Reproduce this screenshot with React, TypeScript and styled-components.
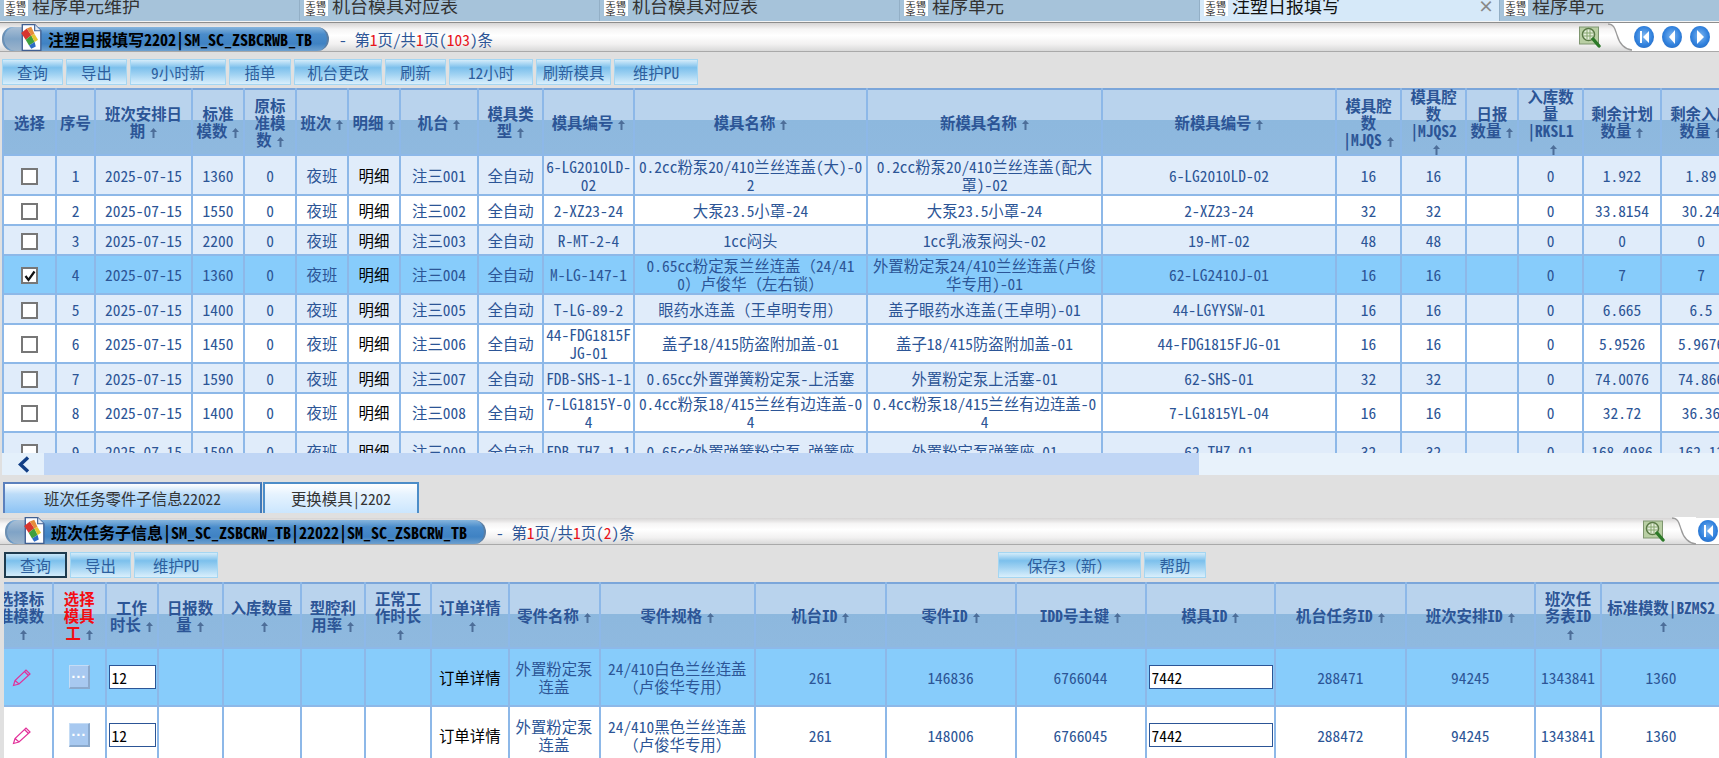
import React from 'react';
import styled, { createGlobalStyle } from 'styled-components';

const Global = createGlobalStyle`
  html, body { margin: 0; padding: 0; height: 100%; overflow: hidden; }
  body {
    font-family: "Noto Sans CJK SC", "Liberation Sans", sans-serif;
    font-size: 15.4px;
    font-feature-settings: "hwid";
    color: #2c5596;
  }
`;

const Page = styled.div`
  width: 1719px; height: 758px; overflow: hidden;
  background: #e0e0e0;
  display: flex; flex-direction: column;
`;

const FullWidth = styled.span` font-feature-settings: normal; `;

/* ---------- top tab strip ---------- */
const TabStrip = styled.div`
  height: 21px; flex: none; display: flex; overflow: hidden;
  background: #a6c3da;
`;
const TabItem = styled.div<{ $active?: boolean }>`
  width: 300px; flex: none; height: 21px; display: flex; gap: 4px;
  padding-left: 4px; box-sizing: border-box; position: relative;
  background: ${p => (p.$active ? '#d6e9f9' : '#a6c3da')};
  border-right: 1px solid #93afc6;
  color: ${p => (p.$active ? '#111' : '#333')};
  font-size: 18px; line-height: 10px;
`;
const TabLogo = styled.div`
  width: 24px; height: 16px; flex: none; background: #fff; overflow: hidden;
  color: #222; font-size: 10px; line-height: 8px; text-align: center; letter-spacing: 0.5px;
  display: flex; flex-direction: column; justify-content: flex-end;
`;
const TabLogoLine = styled.span`
  display: block; flex: none; height: 8px; transform: scaleY(0.72);
`;
const TabClose = styled.span`
  position: absolute; right: 5px; top: -1px; color: #888; font-size: 16px; font-weight: bold; line-height: 12px;
`;
const TabRule = styled.div`
  height: 2px; flex: none; background: #f4f4f4; border-bottom: 1px solid #8d8d8d; box-sizing: border-box;
`;

/* ---------- title bar ---------- */
const TitleBar = styled.div<{ $h: number }>`
  height: ${p => p.$h}px; flex: none; display: flex; align-items: flex-end; position: relative;
  padding-left: ${p => (p.$h > 27 ? 2 : 5)}px; box-sizing: border-box;
  background: linear-gradient(#d6d4d4 0%, #f6f5f5 22%, #ffffff 45%, #f2f1f1 75%, #d9d9d9 100%);
  border-bottom: 1px solid #a9a9a9;
`;
const Capsule = styled.div<{ $w: number }>`
  width: ${p => p.$w}px; height: 24px; box-sizing: border-box; flex: none; position: relative;
  border-radius: 13px 14px 14px 13px;
  background: linear-gradient(#86b5dd 0%, #4a8ccb 30%, #3f82c3 70%, #6da0cf 100%);
  border-right: 2px solid #5b7ea3; border-left: 2px solid #6e90b2;
  display: flex; align-items: center; padding-left: 44px;
  color: #000; font-weight: bold; font-size: 16px; white-space: nowrap;
  &::before {
    content: ''; position: absolute; left: 0; top: 0; bottom: 0; width: 20px;
    border-radius: 12px 0 0 12px;
    background: linear-gradient(#a9bfd5, #7fa3c6 50%, #9cb4cb);
  }
`;
const CapsuleIcon = styled.svg`
  position: absolute; left: 16px; top: -3px;
`;
const Pager = styled.div`
  margin-left: 10px; height: 24px; line-height: 24px; white-space: nowrap; color: #2c5596;
`;
const Red = styled.span` color: #e8121a; `;
const TitleTools = styled.div`
  margin-left: auto; height: 100%; display: flex; align-items: center; flex: none; gap: 5px;
`;
const SwooshTail = styled.div` display: flex; align-items: center; height: 100%; `;
const Tail = styled.div<{ $w: number }>`
  width: ${p => p.$w}px; flex: none; height: 100%; display: flex; align-items: center; gap: 8px; overflow: hidden;
  background: #fff; padding-left: 2px; box-sizing: border-box;
`;

/* ---------- toolbars ---------- */
const Toolbar = styled.div<{ $h: number; $left: number }>`
  height: ${p => p.$h}px; flex: none; box-sizing: border-box;
  padding: 7px 0 0 ${p => p.$left}px;
  display: flex; gap: 3px; align-items: flex-start;
`;
const ToolButton = styled.button<{ $w: number; $focus?: boolean }>`
  width: ${p => p.$w}px; height: 26px; flex: none; padding: 0; box-sizing: border-box;
  font: inherit; font-size: 15.4px; font-feature-settings: "hwid"; line-height: 22px; color: #2c5f9e;
  border: 1px solid #fff;
  outline: 1px solid ${p => (p.$focus ? '#1d3a4e' : '#a4d6f2')}; outline-offset: -1px;
  box-shadow: inset 0 0 0 ${p => (p.$focus ? 1 : 0)}px #1d3a4e;
  background: linear-gradient(#d4ecfa 0%, #7cc0ec 32%, #a0d2f2 60%, #d9effc 100%);
`;
const ToolSpacer = styled.div<{ $w: number }>` width: ${p => p.$w}px; flex: none; `;

/* ---------- grids ---------- */
const GridViewport = styled.div<{ $h: number; $left: number }>`
  height: ${p => p.$h}px; flex: none; overflow: hidden; margin-left: ${p => p.$left}px;
`;
const Grid = styled.table<{ $w: number; $shift?: number }>`
  width: ${p => p.$w}px; table-layout: fixed; border-collapse: collapse;
  margin-left: ${p => p.$shift ?? 0}px;
`;
const HeadRow = styled.tr<{ $h: number }>` height: ${p => p.$h}px; `;
const Head = styled.th<{ $red?: boolean }>`
  padding: 0 3px; border: 2px solid #8db8e8; border-top: 2px solid #7ba6da;
  background: linear-gradient(#b9d3ed 0%, #b9d3ed 47.5%, #8db8de 47.5%, #8fb9df 100%);
  color: ${p => (p.$red ? '#f40c12' : '#2c5596')};
  font-size: 15.4px; font-weight: bold; line-height: 17px; text-align: center;
  word-break: break-all; white-space: pre-line;
`;
const HeadInner = styled.div`
  margin: -3px 0;
`;
const SortMark = styled.svg`
  margin-left: 5px; vertical-align: -1px;
`;
const Row = styled.tr<{ $h: number; $bg: string }>`
  height: ${p => p.$h}px; background: ${p => p.$bg};
`;
const Cell = styled.td<{ $ink?: boolean }>`
  padding: 0 2px 1px; border: 2px solid #8db8e8; text-align: center; line-height: 18px;
  word-break: break-all; overflow: hidden;
  color: ${p => (p.$ink ? '#000' : '#2c5596')};
`;
const CheckBox = styled.span`
  display: inline-flex; width: 17px; height: 17px; box-sizing: border-box; vertical-align: middle;
  background: #fff; border: 2px solid #777; align-items: center; justify-content: center;
`;
const GridInput = styled.input<{ $w: number }>`
  width: ${p => p.$w}px; height: 24px; box-sizing: border-box; display: block; margin: 0 auto 0 0;
  border: 1px solid #2c5596; padding: 0 2px; background: #fff; color: #000;
  font: inherit; font-feature-settings: "hwid"; font-size: 15.4px;
  outline: none;
`;
const MoreButton = styled.span`
  display: inline-block; width: 21px; height: 24px; box-sizing: border-box; vertical-align: middle;
  background: #a8c9f0; border-style: solid; border-width: 1px 2px 2px 1px;
  border-color: #c5dcf5 #8ba9cc #8ba9cc #c5dcf5;
  color: #fff; font-weight: bold; font-size: 15px; line-height: 21px; text-align: center;
  font-family: "Liberation Sans", sans-serif;
`;

/* ---------- h scroll ---------- */
const HScroll = styled.div`
  height: 22px; flex: none; display: flex; background: #e8f2fb; margin-left: 2px;
`;
const HScrollArrow = styled.div`
  width: 42px; flex: none; display: flex; align-items: center; justify-content: center; background: #e4f0fb;
`;
const HScrollThumb = styled.div` width: 1155px; flex: none; background: #c0d6f5; `;

/* ---------- sub tabs ---------- */
const SubTabs = styled.div`
  height: 31px; flex: none; margin: 7px 0 5px 3px; display: flex; gap: 1px;
`;
const SubTab = styled.div<{ $w: number; $on?: boolean }>`
  width: ${p => p.$w}px; box-sizing: border-box; text-align: center; line-height: 29px;
  border-style: solid; border-width: 2px 2px 0 2px;
  border-color: ${p => (p.$on ? '#5b80bd #3f78b8 transparent #5b80bd' : '#4c8dc8 #4c8dc8 transparent #4c8dc8')};
  background: ${p =>
    p.$on
      ? 'linear-gradient(#ffffff 0%, #bcdcf8 35%, #8cc3f5 100%)'
      : 'linear-gradient(#ffffff 0%, #e6f3fe 35%, #cbe6fe 100%)'};
  color: #333;
`;

/* ---------- drawings ---------- */
const Sort = () => (
  <SortMark width="7" height="10" viewBox="0 0 7 10">
    <path d="M3.5 0 L7 4 H4.5 V10 H2.5 V4 H0 Z" fill="#4d6e99" />
  </SortMark>
);

const DocIcon = () => (
  <CapsuleIcon width="22" height="27" viewBox="1.5 1 18.5 24">
    <path d="M3 1.5 H14 L19.5 7 V24.5 H3 Z" fill="#fdfdff" stroke="#3f5f92" strokeWidth="1.2" />
    <path d="M14 1.5 V7 H19.5" fill="#dfe9f6" stroke="#3f5f92" strokeWidth="1" />
    <path d="M2 9 L7 5 L11 11 L6 15 Z" fill="#d8352f" />
    <path d="M7 5 L11 3.5 L14 10 L11 11 Z" fill="#e58c3a" />
    <path d="M6 15 L11 11 L14 17 L9 20 Z" fill="#3f9f3c" />
    <path d="M11 11 L14 10 L17 15 L14 17 Z" fill="#e6c52e" />
    <path d="M9 20 L14 17 L15 21 L11 23 Z" fill="#2d6bc4" />
  </CapsuleIcon>
);

const FindIcon = () => (
  <svg width="22" height="22" viewBox="0 0 22 22">
    <rect x="0.5" y="1" width="19" height="17" fill="#b9cfa4" stroke="#7f9670" />
    <circle cx="9.5" cy="8.5" r="6" fill="#e6f0dc" stroke="#5a7a46" strokeWidth="1.6" />
    <path d="M5 7 H14 M5 10 H14 M8 4 V13 M11 4 V13" stroke="#86a56e" strokeWidth="1" />
    <path d="M14 13 L20 20" stroke="#2c7a28" strokeWidth="3.4" strokeLinecap="round" />
  </svg>
);

const Swoosh = () => (
  <svg width="26" height="28" viewBox="0 0 26 28">
    <path d="M2 1 C8 1 9 6 11 12 C13 19 17 26 26 27 V0 H2 Z" fill="#ffffff" />
    <path d="M2 1 C8 1 9 6 11 12 C13 19 17 26 26 27" fill="none" stroke="#9b9b9b" strokeWidth="1.3" />
  </svg>
);

const NavDisc = ({ kind }: { kind: 'first' | 'prev' | 'next' }) => (
  <svg width="20" height="22" viewBox="0 0 20 22" style={{ flex: 'none' }}>
    <defs>
      <radialGradient id="nd" cx="50%" cy="45%" r="60%">
        <stop offset="0%" stopColor="#7fb7f0" />
        <stop offset="70%" stopColor="#2f80dd" />
        <stop offset="100%" stopColor="#2a6dc2" />
      </radialGradient>
    </defs>
    <ellipse cx="10" cy="11" rx="10" ry="11" fill="url(#nd)" />
    {kind === 'first' && <path d="M6 5 H8 V17 H6 Z M15 5 V17 L9 11 Z" fill="#fff" />}
    {kind === 'prev' && <path d="M13 4 V18 L7 11 Z" fill="#fff" />}
    {kind === 'next' && <path d="M7 4 V18 L14 11 Z" fill="#fff" />}
  </svg>
);

const Pencil = () => (
  <svg width="19" height="19" viewBox="0 0 19 19" style={{ verticalAlign: 'middle' }}>
    <path d="M1.5 17.5 L3 12.5 L14 2 L18 6 L7 16 Z M3 12.5 L7 16 M12.5 3.5 L16.5 7.5" fill="none" stroke="#e2309a" strokeWidth="1.2" />
  </svg>
);

const Tick = () => (
  <svg width="12" height="12" viewBox="0 0 12 12">
    <path d="M1.5 6 L4.5 10 L10.5 1.5" fill="none" stroke="#111" strokeWidth="2.2" />
  </svg>
);

const Chevron = () => (
  <svg width="13" height="17" viewBox="0 0 13 17">
    <path d="M11 1.5 L3.5 8.5 L11 15.5" fill="none" stroke="#123f86" strokeWidth="3.4" />
  </svg>
);

/* the half-width feature would also narrow full-width brackets, so they get their own span */
const Txt = ({ v }: { v: string }) => (
  <>
    {v.split(/([（）])/).map((part, i) =>
      part === '（' || part === '）' ? <FullWidth key={i}>{part}</FullWidth> : part
    )}
  </>
);

/* ---------- data ---------- */
const toWidths = (edges: number[]) => edges.slice(1).map((e, i) => e - edges[i]);

const topEdges = [2, 55, 94, 191, 243, 295, 347, 399, 477, 542, 633, 866, 1101, 1335, 1400, 1465, 1517, 1582, 1660, 1740];
const topHead: [string, boolean][] = [
  ['选择', false], ['序号', false], ['班次安排日期', true], ['标准模数', true], ['原标准模数', true], ['班次', true], ['明细', true],
  ['机台', true], ['模具类型', true], ['模具编号', true], ['模具名称', true], ['新模具名称', true], ['新模具编号', true],
  ['模具腔数\n|MJQS', true], ['模具腔数\n|MJQS2', true], ['日报数量', true], ['入库数量\n|RKSL1', true], ['剩余计划数量', true], ['剩余入库数量', true],
];
const topRows: { h: number; std: string; cells: string[]; nums: string[] }[] = [
  { h: 40, std: '1360', cells: ['6-LG2010LD-02', '0.2cc粉泵20/410兰丝连盖(大)-02', '0.2cc粉泵20/410兰丝连盖(配大罩)-02', '6-LG2010LD-02'], nums: ['16', '16', '', '0', '1.922', '1.89'] },
  { h: 30, std: '1550', cells: ['2-XZ23-24', '大泵23.5小罩-24', '大泵23.5小罩-24', '2-XZ23-24'], nums: ['32', '32', '', '0', '33.8154', '30.24'] },
  { h: 30, std: '2200', cells: ['R-MT-2-4', '1cc闷头', '1cc乳液泵闷头-02', '19-MT-02'], nums: ['48', '48', '', '0', '0', '0'] },
  { h: 39, std: '1360', cells: ['M-LG-147-1', '0.65cc粉定泵兰丝连盖（24/410）卢俊华（左右锁）', '外置粉定泵24/410兰丝连盖(卢俊华专用)-01', '62-LG2410J-01'], nums: ['16', '16', '', '0', '7', '7'] },
  { h: 30, std: '1400', cells: ['T-LG-89-2', '眼药水连盖（王卓明专用）', '盖子眼药水连盖(王卓明)-01', '44-LGYYSW-01'], nums: ['16', '16', '', '0', '6.665', '6.5'] },
  { h: 39, std: '1450', cells: ['44-FDG1815FJG-01', '盖子18/415防盗附加盖-01', '盖子18/415防盗附加盖-01', '44-FDG1815FJG-01'], nums: ['16', '16', '', '0', '5.9526', '5.9676'] },
  { h: 30, std: '1590', cells: ['FDB-SHS-1-1', '0.65cc外置弹簧粉定泵-上活塞', '外置粉定泵上活塞-01', '62-SHS-01'], nums: ['32', '32', '', '0', '74.0076', '74.866'] },
  { h: 39, std: '1400', cells: ['7-LG1815Y-04', '0.4cc粉泵18/415兰丝有边连盖-04', '0.4cc粉泵18/415兰丝有边连盖-04', '7-LG1815YL-04'], nums: ['16', '16', '', '0', '32.72', '36.36'] },
  { h: 39, std: '1590', cells: ['FDB-THZ-1-1', '0.65cc外置弹簧粉定泵-弹簧座', '外置粉定泵弹簧座-01', '62-THZ-01'], nums: ['32', '32', '', '0', '168.4986', '162.12'] },
];

const subEdges = [-12, 52, 104.5, 156.5, 221.5, 299.5, 364, 430, 507.5, 598.5, 754, 884.5, 1014.5, 1144.5, 1274, 1404.5, 1534, 1600, 1720];
const subHead: [string, boolean][] = [
  ['选择标准模数', true], ['选择模具工', true], ['工作时长', true], ['日报数量', true], ['入库数量', true], ['型腔利用率', true], ['正常工作时长', true],
  ['订单详情', true], ['零件名称', true], ['零件规格', true], ['机台ID', true], ['零件ID', true], ['IDD号主键', true], ['模具ID', true],
  ['机台任务ID', true], ['班次安排ID', true], ['班次任务表ID', true], ['标准模数|BZMS2', true],
];
const subRows = [
  { bg: '#87ccfb', color: '白色', part: '146836', key: '6766044', task: '288471' },
  { bg: '#ffffff', color: '黑色', part: '148006', key: '6766045', task: '288472' },
];

const tabs = ['程序单元维护', '机台模具对应表', '机台模具对应表', '程序单元', '注塑日报填写', '程序单元'];
const topButtons: [string, number][] = [
  ['查询', 61], ['导出', 61], ['9小时新', 96], ['插单', 62], ['机台更改', 88], ['刷新', 61], ['12小时', 84], ['刷新模具', 75], ['维护PU', 84],
];

const HeadCell = ({ text, sort, red }: { text: string; sort: boolean; red?: boolean }) => (
  <Head $red={red}>
    <HeadInner>
      {text}
      {sort && <Sort />}
    </HeadInner>
  </Head>
);

const Colgroup = ({ edges }: { edges: number[] }) => (
  <colgroup>
    {toWidths(edges).map((w, i) => (
      <col key={i} style={{ width: w }} />
    ))}
  </colgroup>
);

const TitleTail = ({ discs, w }: { discs: ('first' | 'prev' | 'next')[]; w: number }) => (
  <TitleTools>
    <FindIcon />
    <SwooshTail>
      <Swoosh />
      <Tail $w={w}>
        {discs.map(k => (
          <NavDisc key={k} kind={k} />
        ))}
      </Tail>
    </SwooshTail>
  </TitleTools>
);

export default function App() {
  return (
    <Page>
      <Global />
      <TabStrip>
        {tabs.map((t, i) => (
          <TabItem key={i} $active={i === 4}>
            <TabLogo>
              <TabLogoLine>无锡</TabLogoLine>
              <TabLogoLine>圣马</TabLogoLine>
            </TabLogo>
            <span>{t}</span>
            {i === 4 && <TabClose>×</TabClose>}
          </TabItem>
        ))}
      </TabStrip>
      <TabRule />

      <TitleBar $h={29}>
        <Capsule $w={327}>
          <DocIcon />
          注塑日报填写2202|SM_SC_ZSBCRWB_TB
        </Capsule>
        <Pager>
          - 第<Red>1</Red>页/共<Red>1</Red>页(<Red>103</Red>)条
        </Pager>
        <TitleTail discs={['first', 'prev', 'next']} w={87} />
      </TitleBar>

      <Toolbar $h={36} $left={2}>
        {topButtons.map(([t, w]) => (
          <ToolButton key={t} $w={w}>{t}</ToolButton>
        ))}
      </Toolbar>

      <GridViewport $h={365} $left={2}>
        <Grid $w={1738}>
          <Colgroup edges={topEdges} />
          <thead>
            <HeadRow $h={66}>
              {topHead.map(([t, s]) => (
                <HeadCell key={t} text={t} sort={s} />
              ))}
            </HeadRow>
          </thead>
          <tbody>
            {topRows.map((r, i) => (
              <Row key={i} $h={r.h} $bg={i === 3 ? '#87ccfb' : i % 2 === 0 ? '#e0ecfa' : '#ffffff'}>
                <Cell>
                  <CheckBox>{i === 3 && <Tick />}</CheckBox>
                </Cell>
                <Cell>{i + 1}</Cell>
                <Cell>2025-07-15</Cell>
                <Cell>{r.std}</Cell>
                <Cell>0</Cell>
                <Cell>夜班</Cell>
                <Cell $ink>明细</Cell>
                <Cell>注三00{i + 1}</Cell>
                <Cell>全自动</Cell>
                {r.cells.map((c, j) => (
                  <Cell key={j}><Txt v={c} /></Cell>
                ))}
                {r.nums.map((n, j) => (
                  <Cell key={j}>{n}</Cell>
                ))}
              </Row>
            ))}
          </tbody>
        </Grid>
      </GridViewport>

      <HScroll>
        <HScrollArrow>
          <Chevron />
        </HScrollArrow>
        <HScrollThumb />
      </HScroll>

      <SubTabs>
        <SubTab $w={259} $on>班次任务零件子信息22022</SubTab>
        <SubTab $w={156}>更换模具|2202</SubTab>
      </SubTabs>

      <TitleBar $h={27}>
        <Capsule $w={481}>
          <DocIcon />
          班次任务子信息|SM_SC_ZSBCRW_TB|22022|SM_SC_ZSBCRW_TB
        </Capsule>
        <Pager>
          - 第<Red>1</Red>页/共<Red>1</Red>页(<Red>2</Red>)条
        </Pager>
        <TitleTail discs={['first']} w={23} />
      </TitleBar>

      <Toolbar $h={37} $left={4}>
        <ToolButton $w={63} $focus>查询</ToolButton>
        <ToolButton $w={61}>导出</ToolButton>
        <ToolButton $w={84}>维护PU</ToolButton>
        <ToolSpacer $w={774} />
        <ToolButton $w={143}><Txt v="保存3（新）" /></ToolButton>
        <ToolButton $w={62}>帮助</ToolButton>
      </Toolbar>

      <GridViewport $h={176} $left={4}>
        <Grid $w={1732} $shift={-16}>
          <Colgroup edges={subEdges} />
          <thead>
            <HeadRow $h={65}>
              {subHead.map(([t, s], i) => (
                <HeadCell key={t} text={t} sort={s} red={i === 1} />
              ))}
            </HeadRow>
          </thead>
          <tbody>
            {subRows.map(r => (
              <Row key={r.key} $h={58} $bg={r.bg}>
                <Cell><Pencil /></Cell>
                <Cell><MoreButton>···</MoreButton></Cell>
                <Cell><GridInput $w={47} defaultValue="12" readOnly /></Cell>
                <Cell />
                <Cell />
                <Cell />
                <Cell />
                <Cell $ink>订单详情</Cell>
                <Cell>外置粉定泵连盖</Cell>
                <Cell><Txt v={`24/410${r.color}兰丝连盖（卢俊华专用）`} /></Cell>
                <Cell>261</Cell>
                <Cell>{r.part}</Cell>
                <Cell>{r.key}</Cell>
                <Cell><GridInput $w={124} defaultValue="7442" readOnly /></Cell>
                <Cell>{r.task}</Cell>
                <Cell>94245</Cell>
                <Cell>1343841</Cell>
                <Cell>1360</Cell>
              </Row>
            ))}
          </tbody>
        </Grid>
      </GridViewport>
    </Page>
  );
}
